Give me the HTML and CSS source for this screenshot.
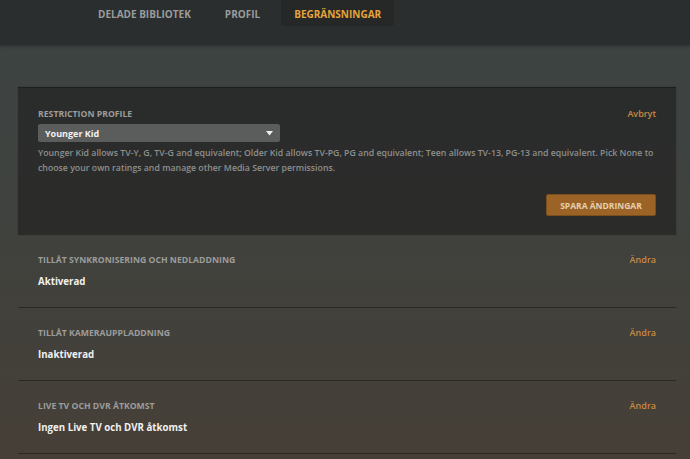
FILE: index.html
```html
<!DOCTYPE html>
<html lang="sv">
<head>
<meta charset="utf-8">
<title>Begränsningar</title>
<link rel="stylesheet" href="styles.css">
</head>
<body>
<header class="topbar">
  <nav class="tabs">
    <a class="tab">DELADE BIBLIOTEK</a>
    <a class="tab">PROFIL</a>
    <a class="tab tab-active">BEGRÄNSNINGAR</a>
  </nav>
</header>
<main class="content">
  <section class="card">
    <div class="card-head">
      <span class="label">RESTRICTION PROFILE</span>
      <a class="link">Avbryt</a>
    </div>
    <div class="select">
      <span>Younger Kid</span>
      <svg class="caret" width="7" height="5" viewBox="0 0 7 5"><path d="M0 0h7L3.5 4.5z" fill="#eee"/></svg>
    </div>
    <p class="desc">Younger Kid allows TV-Y, G, TV-G and equivalent; Older Kid allows TV-PG, PG and equivalent; Teen allows TV-13, PG-13 and equivalent. Pick None to choose your own ratings and manage other Media Server permissions.</p>
    <div class="actions">
      <button class="btn">SPARA ÄNDRINGAR</button>
    </div>
  </section>
  <section class="row">
    <div class="row-main">
      <span class="label">TILLÅT SYNKRONISERING OCH NEDLADDNING</span>
      <span class="value">Aktiverad</span>
    </div>
    <a class="link">Ändra</a>
  </section>
  <section class="row">
    <div class="row-main">
      <span class="label">TILLÅT KAMERAUPPLADDNING</span>
      <span class="value">Inaktiverad</span>
    </div>
    <a class="link">Ändra</a>
  </section>
  <section class="row">
    <div class="row-main">
      <span class="label">LIVE TV OCH DVR ÅTKOMST</span>
      <span class="value">Ingen Live TV och DVR åtkomst</span>
    </div>
    <a class="link">Ändra</a>
  </section>
</main>
</body>
</html>
```
FILE: styles.css
```css
html, body {
  margin: 0;
  height: 100%;
}
body {
  font-family: "Open Sans", "Liberation Sans", sans-serif;
  background: linear-gradient(180deg, #3d4443 0px, #3f423f 200px, #463f37 459px);
  overflow: hidden;
  color: #eee;
}
.topbar {
  height: 45px;
  background: #2b2e2e;
  box-shadow: 0 1px 3px rgba(0,0,0,0.35);
  position: relative;
}
.tabs {
  display: flex;
  gap: 8px;
  padding-left: 85px;
}
.tab {
  display: block;
  padding: 0 13px;
  height: 26px;
  line-height: 28px;
  font-size: 10px;
  font-weight: 700;
  color: #9a9c9c;
}
.tab-active {
  background: #262828;
  color: #e5a33a;
  border-radius: 0 0 3px 3px;
}
.content {
  padding: 42px 14px 0 18px;
}
.card {
  background: linear-gradient(180deg, #2a2c2c, #2b2b29);
  border-top: 1px solid #1e2020;
  padding: 20px 20px 19px 20px;
  box-shadow: 0 0 1px rgba(0,0,0,0.4);
}
.card-head {
  display: flex;
  justify-content: space-between;
  align-items: baseline;
}
.label {
  font-size: 8.7px;
  font-weight: 700;
  color: #9c9c9a;
  line-height: 12px;
}
.link {
  font-size: 9px;
  font-weight: 600;
  color: #c88a42;
  line-height: 12px;
}
.select {
  margin-top: 4px;
  width: 242px;
  height: 18px;
  box-sizing: border-box;
  background: #5b5c5c;
  border-radius: 2px;
  display: flex;
  align-items: center;
  justify-content: space-between;
  padding: 0 7px;
  font-size: 9px;
  font-weight: 700;
  color: #f2f2f2;
}
.caret {
  display: block;
}
.desc {
  margin: 4px 0 0;
  font-size: 8.75px;
  font-weight: 600;
  line-height: 15px;
  color: #8e8f8e;
  max-width: 620px;
}
.actions {
  display: flex;
  justify-content: flex-end;
  margin-top: 18px;
}
.btn {
  font-family: inherit;
  width: 110px;
  height: 22px;
  border: 1px solid #7a4f1c;
  border-radius: 2px;
  background: #9b6325;
  color: #e6d0b0;
  font-size: 8.5px;
  font-weight: 700;
  padding: 0;
}
.row {
  display: flex;
  justify-content: space-between;
  align-items: flex-start;
  padding: 19px 20px 0;
  height: 73px;
  box-sizing: border-box;
  border-bottom: 1px solid #2a2826;
}
.row:first-of-type {
  height: 74px;
}
.row-main {
  display: flex;
  flex-direction: column;
  gap: 9px;
}
.value {
  font-size: 9.7px;
  font-weight: 700;
  color: #f0f0f0;
  line-height: 14px;
}
```
